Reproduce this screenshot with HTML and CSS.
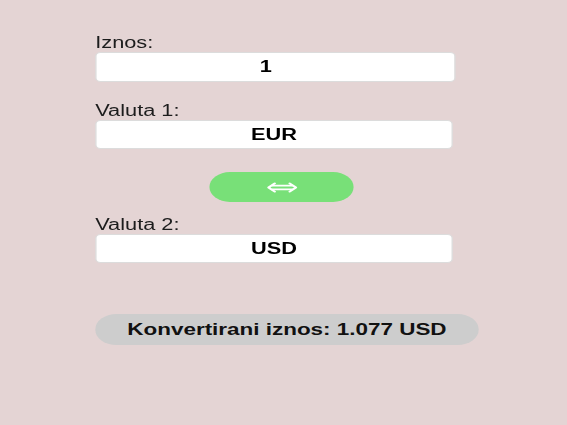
FILE: index.html
```html
<!DOCTYPE html>
<html lang="hr">
<head>
<meta charset="utf-8">
<title>Pretvornik valuta</title>
<link rel="stylesheet" href="styles.css">
</head>
<body>
<main class="page">
  <div class="field field-amount">
    <label class="label" for="iznos">Iznos:</label>
    <input class="control control-input" id="iznos" type="text" value="1">
  </div>
  <div class="field">
    <label class="label" for="valuta1">Valuta 1:</label>
    <select class="control control-select" id="valuta1">
      <option selected>EUR</option>
      <option>USD</option>
    </select>
  </div>
  <button class="swap" type="button" aria-label="Zamijeni valute">
    <svg class="swap-icon" viewBox="0 0 26 12" width="26" height="12" aria-hidden="true">
      <polyline points="7,1.5 2,6 7,10.5" fill="none" stroke="#fff" stroke-width="2" stroke-linecap="round" stroke-linejoin="round"/>
      <polyline points="19,1.5 24,6 19,10.5" fill="none" stroke="#fff" stroke-width="2" stroke-linecap="round" stroke-linejoin="round"/>
      <line x1="4.5" y1="4" x2="21.5" y2="4" stroke="#fff" stroke-width="1.8"/>
      <line x1="4.5" y1="8" x2="21.5" y2="8" stroke="#fff" stroke-width="1.8"/>
    </svg>
  </button>
  <div class="field field-second">
    <label class="label" for="valuta2">Valuta 2:</label>
    <select class="control control-select" id="valuta2">
      <option>EUR</option>
      <option selected>USD</option>
    </select>
  </div>
  <div class="result">Konvertirani iznos: 1.077 USD</div>
</main>
</body>
</html>
```
FILE: styles.css
```css
html, body {
  margin: 0;
  padding: 0;
}

body {
  background: #e4d4d4;
  font-family: "Liberation Sans", Arial, sans-serif;
  overflow: hidden;
}

.page {
  width: 417px;
  height: 425px;
  box-sizing: border-box;
  padding: 34px 0 0 70px;
  display: flex;
  flex-direction: column;
  align-items: flex-start;
  transform: scaleX(1.36);
  transform-origin: 0 0;
}

.field {
  display: flex;
  flex-direction: column;
  align-items: flex-start;
}

.field-amount {
  margin-bottom: 20px;
}

.field-second {
  margin-top: 14px;
}

.label {
  font-size: 16px;
  line-height: 18px;
  color: #1c1c1c;
}

.control {
  box-sizing: border-box;
  height: 30px;
  margin: 0;
  padding: 0;
  border: 1px solid #dcdcdc;
  border-radius: 4px;
  background: #fff;
  color: #000;
  font-family: "Liberation Sans", Arial, sans-serif;
  font-weight: bold;
  font-size: 16px;
  text-align: center;
  outline: none;
}

.control-input {
  width: 265px;
  padding-right: 14px;
}

.control-select {
  width: 263px;
  height: 29px;
  appearance: none;
  -webkit-appearance: none;
  text-align-last: center;
}

.swap {
  margin: 23px 0 0 84px;
  width: 106px;
  height: 30px;
  padding: 0;
  border: none;
  border-radius: 15px;
  background: #78e078;
  display: flex;
  align-items: center;
  justify-content: center;
  cursor: pointer;
}

.swap-icon {
  display: block;
  width: 25px;
  height: 11px;
}

.result {
  margin-top: 51px;
  width: 282px;
  height: 31px;
  border-radius: 16px;
  background: #cdcdcd;
  color: #111;
  font-weight: bold;
  font-size: 16.5px;
  line-height: 31px;
  text-align: center;
}
```
